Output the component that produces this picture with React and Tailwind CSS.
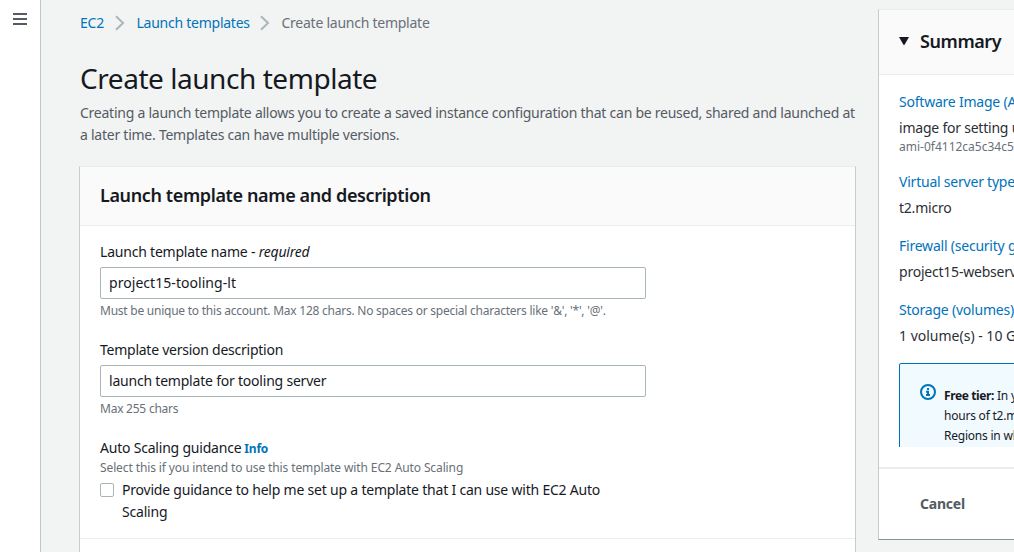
function Chevron() {
  return (
    <svg width="10" height="16" viewBox="0 0 10 16" fill="none" stroke="#aab7b8" strokeWidth="2" className="block shrink-0">
      <path d="M1 1.2 L8 8 L1 14.8" />
    </svg>
  );
}

function Sidebar() {
  return (
    <aside className="w-[41px] shrink-0 border-r border-[#bfc7c7] bg-white pt-[13px] pl-[13px]">
      <button aria-label="Open navigation" className="flex flex-col gap-[3px]">
        <span className="h-[2px] w-[14px] bg-[#545b64]" />
        <span className="h-[2px] w-[14px] bg-[#545b64]" />
        <span className="h-[2px] w-[14px] bg-[#545b64]" />
      </button>
    </aside>
  );
}

function Breadcrumbs() {
  return (
    <nav className="flex h-[22px] items-center tracking-[-0.25px] whitespace-nowrap text-[#0073bb]">
      <a className="w-[35px]">EC2</a>
      <Chevron />
      <a className="ml-[11.5px] w-[123.5px]">Launch templates</a>
      <Chevron />
      <span className="ml-[11.5px] text-[#687078]">Create launch template</span>
    </nav>
  );
}

function TextField({ value, className }) {
  return (
    <div className="mt-[4px] flex h-[32px] w-[546px] items-center rounded-[2px] border border-[#aab7b8] bg-white pl-[8px]">
      <span className={className}>{value}</span>
    </div>
  );
}

function DetailsCard() {
  return (
    <section className="mt-[20px] ml-[-1px] h-[400px] w-[777px] border border-t-[#eaeded] border-r-[#c6cccc] border-l-[#c6cccc] bg-white">
      <header className="flex h-[59px] items-center border-b border-[#eaeded] bg-[#fafafa] pb-[2px] pl-[20px]">
        <h2 className="text-[18px] leading-[22px] font-semibold tracking-[-0.38px] whitespace-nowrap">Launch template name and description</h2>
      </header>
      <div className="h-[313px] border-b border-[#eaeded] pt-[15px] pl-[20px] tracking-[-0.21px] whitespace-nowrap">
        <div>Launch template name - <em>required</em></div>
        <TextField value="project15-tooling-lt" className="tracking-[0.05px]" />
        <p className="mt-[3px] text-[12px] leading-[18px] tracking-[-0.24px] text-[#687078]">
          Must be unique to this account. Max 128 chars. No spaces or special characters like '&', '*', '@'.
        </p>
        <div className="mt-[19px] tracking-[-0.25px]">Template version description</div>
        <TextField value="launch template for tooling server" />
        <p className="mt-[3px] text-[12px] leading-[18px] tracking-[-0.24px] text-[#687078]">Max 255 chars</p>
        <div className="mt-[19px] flex items-baseline gap-[3px]">
          Auto Scaling guidance <a className="text-[12px] font-bold text-[#0073bb]">Info</a>
        </div>
        <p className="text-[12px] leading-[16px] tracking-[-0.11px] text-[#687078]">
          Select this if you intend to use this template with EC2 Auto Scaling
        </p>
        <label className="mt-[3px] flex">
          <span className="mt-[4px] mr-[8px] size-[14px] shrink-0 rounded-[2px] border border-[#aab7b8] bg-white" />
          <span>
            Provide guidance to help me set up a template that I can use with EC2 Auto
            <br />
            Scaling
          </span>
        </label>
      </div>
    </section>
  );
}

function SummaryItem({ title, children, className }) {
  return (
    <div className={className}>
      <a className="block text-[#0073bb]">{title}</a>
      <div className="mt-[4px]">{children}</div>
    </div>
  );
}

function SummaryCard() {
  return (
    <section className="mt-[9px] h-[531px] w-[300px] shrink-0 border border-t-[#eaeded] border-b-[#879596] border-l-[#c6cccc] bg-white tracking-[-0.22px] whitespace-nowrap">
      <header className="flex h-[65px] items-center border-b border-[#eaeded] bg-[#fafafa] pb-[3px] pl-[20px]">
        <svg width="10" height="8" viewBox="0 0 10 8" className="mr-[11px] block shrink-0" fill="#16191f">
          <path d="M0 0h10L5.7 7.6a.8.8 0 0 1-1.4 0z" />
        </svg>
        <h2 className="text-[18px] leading-[22px] font-semibold tracking-[-0.42px]">Summary</h2>
      </header>
      <div className="h-[372px] overflow-hidden pt-[16px] pl-[20px] text-[#2b2f36]">
        <SummaryItem title="Software Image (AMI)">image for setting up servers</SummaryItem>
        <div className="text-[12px] leading-[16px] tracking-[0px] text-[#687078]">ami-0f4112ca5c34c5</div>
        <SummaryItem className="mt-[16px]" title="Virtual server type (instance type)">t2.micro</SummaryItem>
        <SummaryItem className="mt-[16px]" title="Firewall (security group)">project15-webserver</SummaryItem>
        <SummaryItem className="mt-[16px]" title="Storage (volumes)">
          <span className="tracking-[0px]">1 volume(s) - 10 GiB</span>
        </SummaryItem>
        <div className="mt-[16px] flex h-[120px] rounded-tl-[2px] border border-[#0073bb] bg-[#f1faff] pt-[20px] pl-[20px] text-[12px] leading-[20px]">
          <svg width="16" height="16" viewBox="0 0 16 16" fill="none" stroke="#0073bb" strokeWidth="2" className="mr-[8px] block shrink-0">
            <circle cx="8" cy="8" r="7" />
            <path d="M8 11V7.8H6M6 11h4M8 4v2" />
          </svg>
          <p className="mt-[2px] text-[#16191f]">
            <b className="tracking-[-0.38px]">Free tier:</b> In your first year
            <br />
            hours of t2.micro
            <br />
            Regions in which
          </p>
        </div>
      </div>
      <footer className="mt-[20px] h-[72px] border-t-2 border-[#eaeded] pt-[24px] pl-[41px] font-bold text-[#545b64]">Cancel</footer>
    </section>
  );
}

export default function App() {
  return (
    <div className="flex h-[552px] w-[1014px] overflow-hidden bg-[#f2f3f3] font-['Noto_Sans',sans-serif] text-[14px] leading-[22px] text-[#16191f]">
      <Sidebar />
      <main className="ml-[39px] w-[776px] shrink-0 pt-[12px]">
        <Breadcrumbs />
        <h1 className="mt-[26px] text-[28px] leading-[36px] tracking-[-0.45px] whitespace-nowrap">Create launch template</h1>
        <p className="mt-[6px] tracking-[-0.25px] whitespace-nowrap text-[#545b64]">
          Creating a launch template allows you to create a saved instance configuration that can be reused, shared and launched at
          <br />a later time. Templates can have multiple versions.
        </p>
        <DetailsCard />
      </main>
      <div className="ml-[22px] shrink-0">
        <SummaryCard />
      </div>
    </div>
  );
}
